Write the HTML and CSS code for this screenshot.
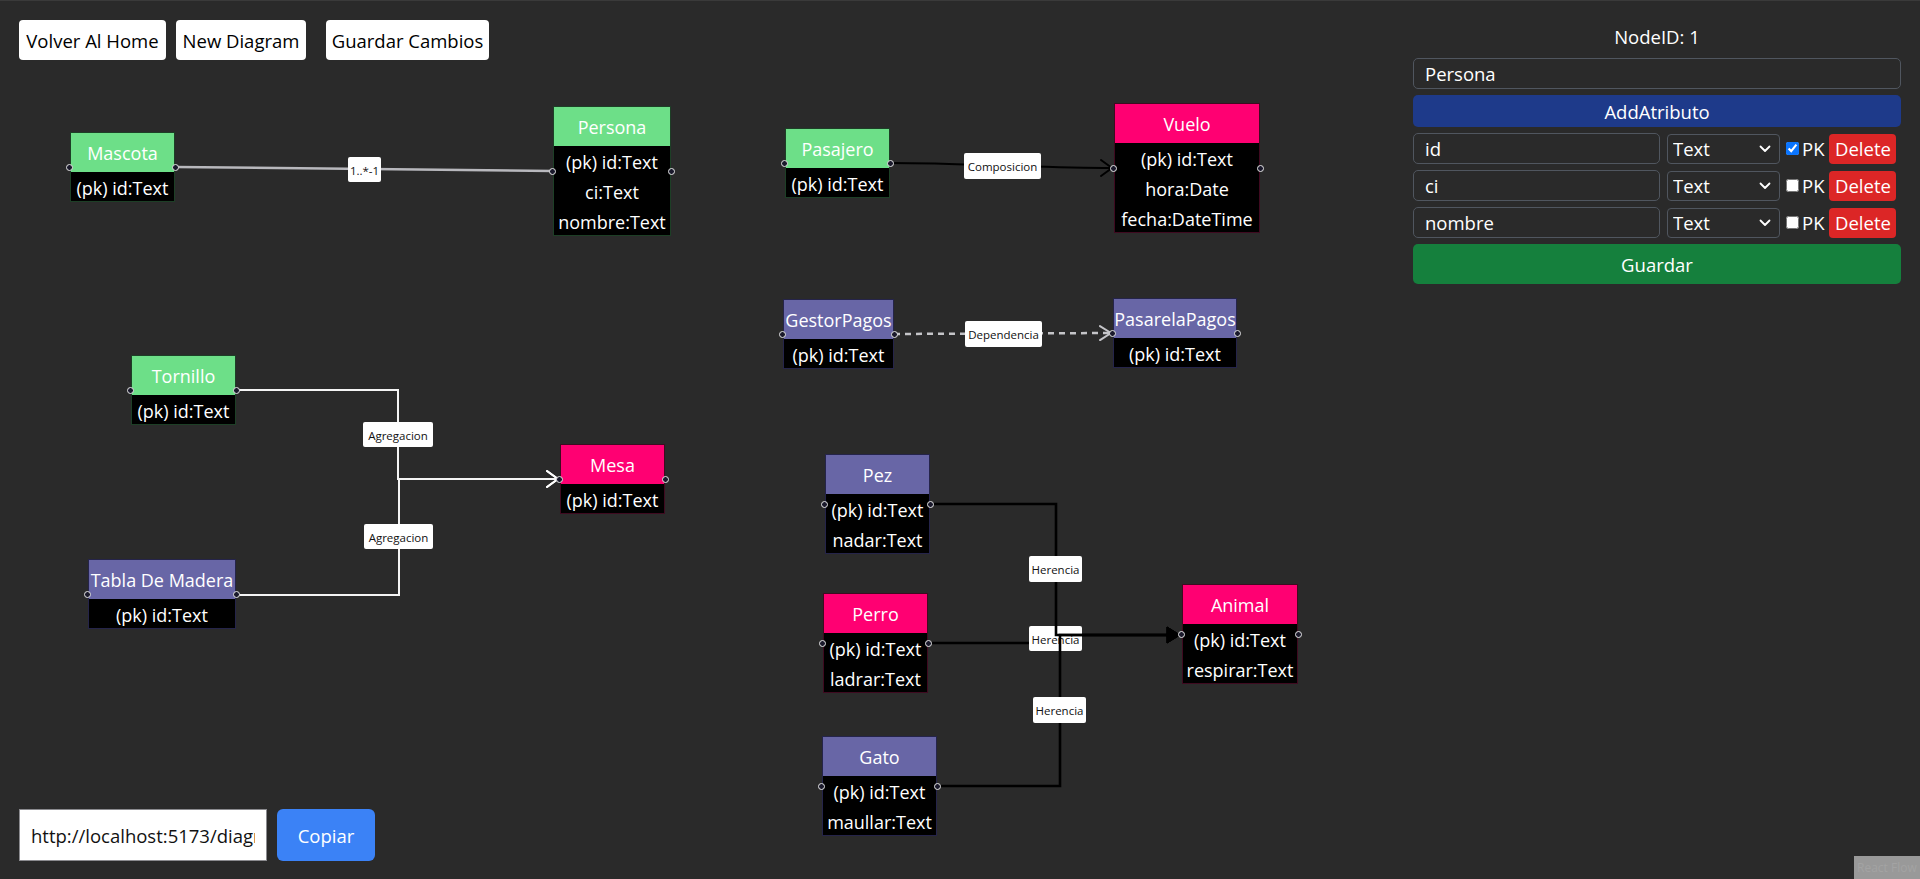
FILE: index.html
```html
<!DOCTYPE html>
<html lang="es">
<head>
<meta charset="utf-8">
<title>Diagram</title>
<link rel="stylesheet" href="styles.css">
</head>
<body>
<div class="app">
  <div class="flow">
    <svg class="edges" width="1920" height="879" viewBox="0 0 1920 879">
      <defs>
        <marker id="arrowBlack" markerWidth="14" markerHeight="20" refX="12" refY="10" orient="auto" markerUnits="userSpaceOnUse">
          <polyline points="1,2 12,10 1,18" fill="none" stroke="#000" stroke-width="2" stroke-linecap="round" stroke-linejoin="round"/>
        </marker>
        <marker id="arrowWhite" markerWidth="14" markerHeight="20" refX="12" refY="10" orient="auto" markerUnits="userSpaceOnUse">
          <polyline points="1,2 12,10 1,18" fill="none" stroke="#fff" stroke-width="2" stroke-linecap="round" stroke-linejoin="round"/>
        </marker>
        <marker id="arrowGray" markerWidth="14" markerHeight="20" refX="12" refY="10" orient="auto" markerUnits="userSpaceOnUse">
          <polyline points="1,3 12,10 1,17" fill="none" stroke="#c4c4c8" stroke-width="2" stroke-linecap="round" stroke-linejoin="round"/>
        </marker>
        <marker id="arrowClosed" markerWidth="16" markerHeight="20" refX="14" refY="10" orient="auto" markerUnits="userSpaceOnUse">
          <polygon points="1,2 14,10 1,18" fill="#000" stroke="#000" stroke-width="1" stroke-linejoin="round"/>
        </marker>
      </defs>

      <!-- Mascota -> Persona -->
      <path class="edge edge-gray" d="M176,167 L553,171"/>
      <g class="label"><rect x="348" y="157" width="33" height="25" rx="2"/><text x="364.5" y="170">1..*-1</text></g>

      <!-- Pasajero -> Vuelo -->
      <path class="edge edge-black" d="M890,163 C960,163 1040,168 1112,168" marker-end="url(#arrowBlack)"/>
      <g class="label"><rect x="964" y="153" width="77" height="26" rx="2"/><text x="1002.5" y="166.5">Composicion</text></g>

      <!-- GestorPagos -> PasarelaPagos -->
      <path class="edge edge-dash" d="M894,334 L1111,333" marker-end="url(#arrowGray)"/>
      <g class="label"><rect x="965" y="321" width="77" height="26" rx="2"/><text x="1003.5" y="334.5">Dependencia</text></g>

      <!-- Tornillo -> Mesa -->
      <path class="edge edge-white" d="M236,390 L398,390 L398,479 L558,479" marker-end="url(#arrowWhite)"/>
      <g class="label"><rect x="363" y="422" width="70" height="25" rx="2"/><text x="398" y="435">Agregacion</text></g>

      <!-- Tabla De Madera -> Mesa -->
      <path class="edge edge-white" d="M237,595 L399,595 L399,479 L558,479" marker-end="url(#arrowWhite)"/>
      <g class="label"><rect x="364" y="524" width="69" height="25" rx="2"/><text x="398.5" y="537">Agregacion</text></g>

      <!-- Perro -> Animal -->
      <path class="edge edge-inh" d="M928,643 L1058,643 L1058,635 L1180,635" marker-end="url(#arrowClosed)"/>
      <g class="label"><rect x="1029" y="626" width="53" height="25" rx="2"/><text x="1055.5" y="639">Herencia</text></g>

      <!-- Pez -> Animal -->
      <path class="edge edge-inh" d="M930,504 L1056,504 L1056,635 L1180,635" marker-end="url(#arrowClosed)"/>
      <g class="label"><rect x="1029" y="556" width="53" height="26" rx="2"/><text x="1055.5" y="569.5">Herencia</text></g>

      <!-- Gato -> Animal -->
      <path class="edge edge-inh" d="M937,786 L1060,786 L1060,635 L1180,635" marker-end="url(#arrowClosed)"/>
      <g class="label"><rect x="1033" y="697" width="53" height="26" rx="2"/><text x="1059.5" y="710.5">Herencia</text></g>
    </svg>

    <div class="node green" style="left:70px;top:132px;width:105px">
      <div class="node-head">Mascota</div>
      <div class="node-body"><div>(pk) id:Text</div></div>
      <span class="handle hl"></span><span class="handle hr"></span>
    </div>

    <div class="node green" style="left:553px;top:106px;width:118px">
      <div class="node-head">Persona</div>
      <div class="node-body"><div>(pk) id:Text</div><div>ci:Text</div><div>nombre:Text</div></div>
      <span class="handle hl"></span><span class="handle hr"></span>
    </div>

    <div class="node green" style="left:785px;top:128px;width:105px">
      <div class="node-head">Pasajero</div>
      <div class="node-body"><div>(pk) id:Text</div></div>
      <span class="handle hl"></span><span class="handle hr"></span>
    </div>

    <div class="node pink" style="left:1114px;top:103px;width:146px">
      <div class="node-head">Vuelo</div>
      <div class="node-body"><div>(pk) id:Text</div><div>hora:Date</div><div>fecha:DateTime</div></div>
      <span class="handle hl"></span><span class="handle hr"></span>
    </div>

    <div class="node purple" style="left:783px;top:299px;width:111px">
      <div class="node-head">GestorPagos</div>
      <div class="node-body"><div>(pk) id:Text</div></div>
      <span class="handle hl"></span><span class="handle hr"></span>
    </div>

    <div class="node purple" style="left:1113px;top:298px;width:124px">
      <div class="node-head">PasarelaPagos</div>
      <div class="node-body"><div>(pk) id:Text</div></div>
      <span class="handle hl"></span><span class="handle hr"></span>
    </div>

    <div class="node green" style="left:131px;top:355px;width:105px">
      <div class="node-head">Tornillo</div>
      <div class="node-body"><div>(pk) id:Text</div></div>
      <span class="handle hl"></span><span class="handle hr"></span>
    </div>

    <div class="node purple" style="left:88px;top:559px;width:148px">
      <div class="node-head">Tabla De Madera</div>
      <div class="node-body"><div>(pk) id:Text</div></div>
      <span class="handle hl"></span><span class="handle hr"></span>
    </div>

    <div class="node pink" style="left:560px;top:444px;width:105px">
      <div class="node-head">Mesa</div>
      <div class="node-body"><div>(pk) id:Text</div></div>
      <span class="handle hl"></span><span class="handle hr"></span>
    </div>

    <div class="node purple" style="left:825px;top:454px;width:105px">
      <div class="node-head">Pez</div>
      <div class="node-body"><div>(pk) id:Text</div><div>nadar:Text</div></div>
      <span class="handle hl"></span><span class="handle hr"></span>
    </div>

    <div class="node pink" style="left:823px;top:593px;width:105px">
      <div class="node-head">Perro</div>
      <div class="node-body"><div>(pk) id:Text</div><div>ladrar:Text</div></div>
      <span class="handle hl"></span><span class="handle hr"></span>
    </div>

    <div class="node pink" style="left:1182px;top:584px;width:116px">
      <div class="node-head">Animal</div>
      <div class="node-body"><div>(pk) id:Text</div><div>respirar:Text</div></div>
      <span class="handle hl"></span><span class="handle hr"></span>
    </div>

    <div class="node purple" style="left:822px;top:736px;width:115px">
      <div class="node-head">Gato</div>
      <div class="node-body"><div>(pk) id:Text</div><div>maullar:Text</div></div>
      <span class="handle hl"></span><span class="handle hr"></span>
    </div>

    <div class="attribution">React Flow</div>
  </div>

  <div class="toolbar">
    <button class="tb-btn w-home">Volver Al Home</button>
    <button class="tb-btn w-new">New Diagram</button>
    <button class="tb-btn w-save">Guardar Cambios</button>
  </div>

  <aside class="panel">
    <div class="panel-title">NodeID: 1</div>
    <input class="field" type="text" value="Persona">
    <button class="btn-add">AddAtributo</button>
    <div class="attr-row">
      <input class="field attr-name" type="text" value="id">
      <div class="select-wrap">
        <select class="attr-type"><option>Text</option></select>
        <svg class="chev" width="12" height="8" viewBox="0 0 12 8"><polyline points="1.5,1.5 6,6 10.5,1.5" fill="none" stroke="#fff" stroke-width="1.8" stroke-linecap="round" stroke-linejoin="round"/></svg>
      </div>
      <label class="pk"><input type="checkbox" checked>PK</label>
      <button class="btn-del">Delete</button>
    </div>
    <div class="attr-row">
      <input class="field attr-name" type="text" value="ci">
      <div class="select-wrap">
        <select class="attr-type"><option>Text</option></select>
        <svg class="chev" width="12" height="8" viewBox="0 0 12 8"><polyline points="1.5,1.5 6,6 10.5,1.5" fill="none" stroke="#fff" stroke-width="1.8" stroke-linecap="round" stroke-linejoin="round"/></svg>
      </div>
      <label class="pk"><input type="checkbox">PK</label>
      <button class="btn-del">Delete</button>
    </div>
    <div class="attr-row">
      <input class="field attr-name" type="text" value="nombre">
      <div class="select-wrap">
        <select class="attr-type"><option>Text</option></select>
        <svg class="chev" width="12" height="8" viewBox="0 0 12 8"><polyline points="1.5,1.5 6,6 10.5,1.5" fill="none" stroke="#fff" stroke-width="1.8" stroke-linecap="round" stroke-linejoin="round"/></svg>
      </div>
      <label class="pk"><input type="checkbox">PK</label>
      <button class="btn-del">Delete</button>
    </div>
    <button class="btn-save">Guardar</button>
  </aside>

  <div class="share">
    <input class="share-url" type="text" value="http://localhost:5173/diagram/1" readonly>
    <button class="btn-copy">Copiar</button>
  </div>
</div>
</body>
</html>
```

FILE: styles.css
```css
* { box-sizing: border-box; }

html, body {
  margin: 0;
  padding: 0;
  width: 1920px;
  height: 879px;
  overflow: hidden;
  background: #2a2a2a;
  font-family: "Open Sans", "Noto Sans", sans-serif;
  color: #fff;
}

.app {
  position: relative;
  width: 1920px;
  height: 879px;
  border-top: 1px solid #3a3a3a;
}

.flow {
  position: absolute;
  inset: 0;
  overflow: hidden;
}

.edges {
  position: absolute;
  left: 0;
  top: -1px;
}

.edge { fill: none; }
.edge-gray { stroke: #b8b8bd; stroke-width: 2.5; }
.edge-black { stroke: #000; stroke-width: 2; }
.edge-dash { stroke: #c4c4c8; stroke-width: 2.5; stroke-dasharray: 6 5; }
.edge-white { stroke: #f4f4f4; stroke-width: 2; }
.edge-inh { stroke: #000; stroke-width: 2.6; }

.label rect { fill: #fff; }
.label text {
  font-family: "Open Sans", "Noto Sans", sans-serif;
  font-size: 11.5px;
  fill: #111;
  text-anchor: middle;
  dominant-baseline: central;
}

.node {
  position: absolute;
  margin-top: -1px;
  text-align: center;
  font-size: 18px;
  color: #fff;
  white-space: nowrap;
  outline: 1px solid rgba(0, 0, 0, 0.35);
  outline-offset: -1px;
}

.node-head {
  height: 40px;
  line-height: 42px;
  overflow: hidden;
}

.node-body {
  background: #000;
  padding: 0 3px;
}

.node-body div {
  height: 30px;
  line-height: 32px;
}

.green .node-head { background: #6ddf88; }
.pink .node-head { background: #ff0072; }
.purple .node-head { background: #6866a6; }
.green { outline-color: #1d3f26; }
.pink { outline-color: #3f0a20; }
.purple { outline-color: #25244a; }

.handle {
  position: absolute;
  top: 50%;
  width: 7px;
  height: 7px;
  margin-top: -3.5px;
  border-radius: 50%;
  background: #1a192b;
  border: 1px solid #e6e6e6;
}
.hl { left: -4px; }
.hr { right: -4px; }

.attribution {
  position: absolute;
  right: 0;
  bottom: 0;
  width: 66px;
  height: 23px;
  padding: 4px 0 0 3px;
  background: #999;
  color: #a3a3a3;
  font-size: 12px;
  line-height: 16px;
  white-space: nowrap;
  overflow: hidden;
}

.toolbar {
  position: absolute;
  left: 19px;
  top: 19px;
  display: flex;
  gap: 10px;
}

.tb-btn {
  height: 40px;
  padding: 0;
  border: none;
  border-radius: 4px;
  background: #fff;
  color: #000;
  font-family: "Open Sans", "Noto Sans", sans-serif;
  font-size: 18.5px;
  white-space: nowrap;
}
.w-home { width: 147px; }
.w-new { width: 130px; }
.w-save { width: 163px; margin-left: 10px; }

.panel {
  position: absolute;
  left: 1413px;
  top: 21px;
  width: 488px;
  display: flex;
  flex-direction: column;
  gap: 6px;
}

.panel-title {
  height: 29px;
  line-height: 29px;
  margin-bottom: 1px;
  text-align: center;
  font-size: 18.5px;
}

.field {
  height: 31px;
  padding: 0 0 0 11px;
  border: 1px solid #50565f;
  border-radius: 5px;
  background: #2a2a2a;
  color: #fff;
  font-family: "Open Sans", "Noto Sans", sans-serif;
  font-size: 18.5px;
  outline: none;
}

.btn-add, .btn-save, .btn-del, .btn-copy {
  border: none;
  color: #fff;
  font-family: "Open Sans", "Noto Sans", sans-serif;
  font-size: 18.5px;
  padding: 0;
}

.btn-add {
  height: 32px;
  border-radius: 5px;
  background: #1e3a8a;
}

.attr-row {
  display: flex;
  align-items: center;
  height: 31px;
}

.attr-name {
  width: 247px;
  height: 31px;
}

.select-wrap {
  position: relative;
  width: 113px;
  height: 30px;
  margin-left: 7px;
}

.attr-type {
  width: 100%;
  height: 100%;
  appearance: none;
  -webkit-appearance: none;
  border: 1px solid #50565f;
  border-radius: 4px;
  background: #2a2a2a;
  color: #fff;
  padding: 0 0 0 5px;
  font-family: "Open Sans", "Noto Sans", sans-serif;
  font-size: 18.5px;
}

.chev {
  position: absolute;
  right: 9px;
  top: 11px;
  pointer-events: none;
}

.pk {
  display: flex;
  align-items: center;
  margin-left: 6px;
  font-size: 18.5px;
}

.pk input {
  width: 13px;
  height: 13px;
  margin: 0 3px 0 0;
  accent-color: #0a75ff;
}

.btn-del {
  width: 67px;
  height: 30px;
  margin-left: 5px;
  border-radius: 4px;
  background: #dc2626;
}

.btn-save {
  height: 40px;
  border-radius: 5px;
  background: #15803d;
}

.share {
  position: absolute;
  left: 19px;
  top: 808px;
  display: flex;
  gap: 10px;
}

.share-url {
  width: 248px;
  height: 52px;
  padding: 0 11px;
  border: 1.5px solid #8b8b8f;
  background: #fff;
  color: #111;
  font-family: "Open Sans", "Noto Sans", sans-serif;
  font-size: 18.5px;
  outline: none;
}

.btn-copy {
  width: 98px;
  height: 52px;
  border-radius: 6px;
  background: #3b82f6;
}
```
